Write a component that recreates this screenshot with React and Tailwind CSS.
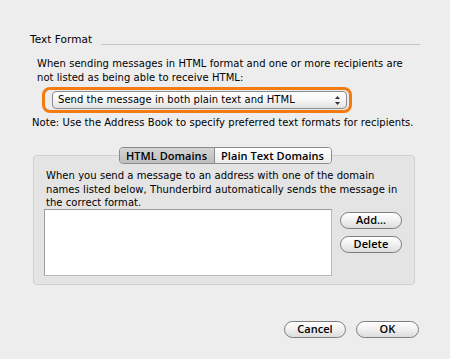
export default function App() {
  const btn =
    "h-[17px] rounded-full border border-[#7d7d7d] bg-gradient-to-b from-white via-[#f0f0f0] to-[#dcdcdc] flex items-center justify-center font-['Open_Sans',sans-serif] font-semibold text-[11px] whitespace-nowrap";

  return (
    <div className="w-[450px] h-[359px] bg-[#ededed] text-black text-[10px] tracking-[0.05px] leading-[14px] font-['DejaVu_Sans','Liberation_Sans',sans-serif] flex flex-col">
      {/* Section heading */}
      <div className="mt-[32px] ml-[30px] mr-[30px] flex items-end">
        <span className="text-[10.5px]">Text Format</span>
        <div className="flex-1 ml-[9px] mb-[1px] h-px bg-[#c6c6c6]" />
      </div>

      <p className="mt-[11px] ml-[37px] leading-[13.5px] whitespace-nowrap">
        When sending messages in HTML format and one or more recipients are
        <br />
        not listed as being able to receive HTML:
      </p>

      {/* Highlighted popup */}
      <div className="mt-[3px] ml-[42px] w-[310px] h-[26px] rounded-[8px] border-[3px] border-[#f47a12] pl-[7px] pt-px">
        <div className="w-[295px] h-[18px] rounded-[4px] border border-[#8c8c8c] bg-gradient-to-b from-white via-[#f6f6f6] to-[#e2e2e2] flex items-center">
          <span className="flex-1 pl-[5px] whitespace-nowrap">Send the message in both plain text and HTML</span>
          <div className="w-[17px] h-full flex items-center justify-center">
            <svg width="7" height="11" viewBox="0 0 7 11">
              <path d="M3.5 1 L6 4 L1 4 Z" fill="#333" />
              <path d="M3.5 10 L6 7 L1 7 Z" fill="#333" />
            </svg>
          </div>
        </div>
      </div>

      <p className="mt-[3px] ml-[32px] whitespace-nowrap">
        Note: Use the Address Book to specify preferred text formats for recipients.
      </p>

      {/* Tabs */}
      <div className="mt-[17px] relative z-10 self-center flex h-[17px] rounded-[4px] border border-[#8a8a8a] overflow-hidden font-['Open_Sans',sans-serif] font-semibold text-[11px] whitespace-nowrap">
        <div className="w-[95px] flex items-center justify-center bg-gradient-to-b from-[#d4d4d4] to-[#bdbdbd] border-r border-[#8a8a8a]">
          HTML Domains
        </div>
        <div className="w-[116px] flex items-center justify-center bg-gradient-to-b from-white to-[#ececec]">
          Plain Text Domains
        </div>
      </div>

      {/* Tab panel */}
      <div className="-mt-[9px] ml-[33px] w-[382px] rounded-[4px] border border-[#d0d0d0] bg-[#e4e4e4] pt-[13px] pl-[12px] pr-[10px] pb-[8px]">
        <p className="leading-[13.5px] whitespace-nowrap">
          When you send a message to an address with one of the domain
          <br />
          names listed below, Thunderbird automatically sends the message in
          <br />
          the correct format.
        </p>
        <div className="-mt-[1px] -ml-[2px] flex items-start">
          <div className="w-[288px] h-[67px] bg-white border border-[#9c9c9c] border-b-[#b8b8b8] border-r-[#b8b8b8]" />
          <div className="ml-[8px] mt-[3px] flex flex-col gap-[7px]">
            <div className={`${btn} w-[62px]`}>Add…</div>
            <div className={`${btn} w-[62px]`}>Delete</div>
          </div>
        </div>
      </div>

      {/* Dialog buttons */}
      <div className="mt-[36px] mr-[31px] flex justify-end gap-[10px]">
        <div className={`${btn} w-[62px]`}>Cancel</div>
        <div className={`${btn} w-[63px]`}>OK</div>
      </div>
    </div>
  );
}
